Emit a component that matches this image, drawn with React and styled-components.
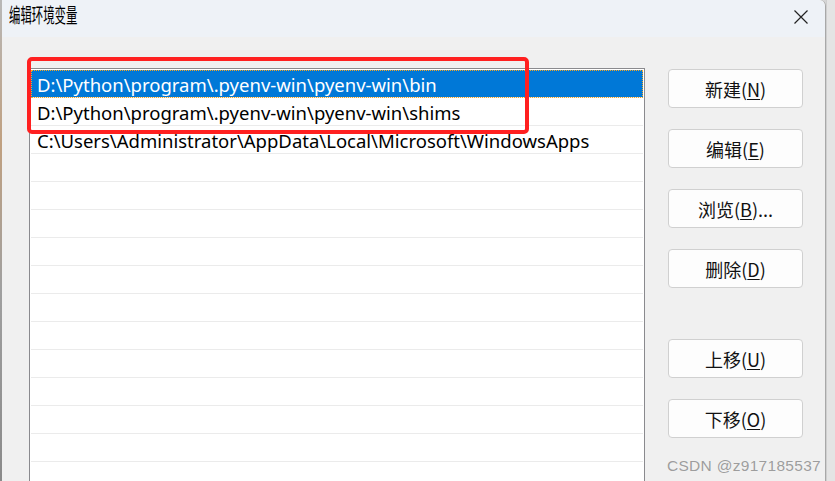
import React from "react";
import styled, { createGlobalStyle } from "styled-components";

const Global = createGlobalStyle`
  html, body { margin: 0; padding: 0; background: #dcdcdc; overflow: hidden; }
  body { width: 835px; height: 481px; font-family: "Noto Sans", "Noto Sans CJK SC", sans-serif; }
`;

const Screen = styled.div`
  width: 835px;
  height: 481px;
  display: flex;
  background: #d6d6d6;
  overflow: hidden;
`;

const LeftStrip = styled.div`
  width: 2px;
  background: linear-gradient(#b8b8b8, #c0a080 30%, #a0a0a0 60%, #8a8a8a);
`;

const Dialog = styled.div`
  width: 823px;
  height: 100%;
  background: #f0f0f0;
  border-right: 1px solid #a8a8a8;
  border-top-right-radius: 6px;
  display: flex;
  flex-direction: column;
  overflow: hidden;
`;

const RightStrip = styled.div`
  flex: 1;
  background: #e4e4e4;
  border-left: 1px solid #cfcfcf;
`;

const TitleBar = styled.div`
  height: 37px;
  flex: none;
  background: #eef2f7;
  display: flex;
  align-items: center;
  justify-content: space-between;
  padding: 0 16px 0 7px;
  border-top-right-radius: 6px;
`;

const Title = styled.span`
  font-family: "Noto Sans CJK SC", sans-serif;
  font-size: 20px;
  font-weight: 400;
  line-height: 20px;
  color: #000;
  display: inline-block;
  transform: scaleX(0.57);
  transform-origin: left center;
  margin-top: -8px;
  white-space: nowrap;
`;

const Close = styled.svg`
  width: 16px;
  height: 16px;
  margin-top: -4px;
`;

const Body = styled.div`
  flex: 1;
  min-height: 0;
  display: flex;
  padding: 31px 0 0 27px;
  gap: 23px;
  position: relative;
  overflow: hidden;
`;

const ListBox = styled.div`
  width: 612px;
  flex: none;
  border: 1px solid #8a8a8e;
  border-bottom: none;
  background: #fff;
  padding: 1px;
  align-self: stretch;
  overflow: hidden;
`;

const Row = styled.div`
  height: 26px;
  padding-top: 1px;
  border-bottom: 1px solid #ebebeb;
  display: flex;
  align-items: center;
  padding-left: 6px;
  font-family: "Noto Sans", sans-serif;
  font-size: 18.5px;
  color: ${(p) => (p.$sel ? "#fff" : "#000")};
  background: ${(p) => (p.$sel ? "#0078d7" : "transparent")};
  outline: ${(p) => (p.$sel ? "1px dotted #f5a623" : "none")};
  outline-offset: -1px;
  white-space: nowrap;
`;

const Highlight = styled.div`
  position: absolute;
  left: 25px;
  top: 20px;
  width: 494px;
  height: 69px;
  border: 4px solid #ff2020;
  border-radius: 5px;
  pointer-events: none;
`;

const Buttons = styled.div`
  display: flex;
  flex-direction: column;
  gap: 21px;
  padding-top: 1px;
`;

const Button = styled.div`
  width: 133px;
  height: 37px;
  background: #fdfdfd;
  border: 1px solid #d0d0d0;
  border-radius: 4px;
  display: flex;
  align-items: center;
  justify-content: center;
  font-family: "Noto Sans CJK SC", sans-serif;
  font-size: 18px;
  color: #111;
  margin-top: ${(p) => (p.$extra ? "30px" : "0")};
`;

const U = styled.span`
  text-decoration: underline;
  text-underline-offset: 2px;
  text-decoration-thickness: 1px;
`;

const Watermark = styled.div`
  position: absolute;
  right: 4px;
  bottom: 6px;
  font-family: "Liberation Sans", Arial, sans-serif;
  font-size: 15.5px;
  line-height: 18px;
  color: rgba(120, 120, 120, 0.7);
  letter-spacing: 0.3px;
`;

const rows = [
  "D:\\Python\\program\\.pyenv-win\\pyenv-win\\bin",
  "D:\\Python\\program\\.pyenv-win\\pyenv-win\\shims",
  "C:\\Users\\Administrator\\AppData\\Local\\Microsoft\\WindowsApps",
];

const buttons = [
  ["新建(", "N", ")"],
  ["编辑(", "E", ")"],
  ["浏览(", "B", ")..."],
  ["删除(", "D", ")"],
  ["上移(", "U", ")", true],
  ["下移(", "O", ")"],
];

export default function App() {
  const all = [...rows, ...Array(12).fill("")];
  return (
    <Screen>
      <Global />
      <LeftStrip />
      <Dialog>
        <TitleBar>
          <Title>编辑环境变量</Title>
          <Close viewBox="0 0 16 16">
            <path d="M1.5 1.5 L14.5 14.5 M14.5 1.5 L1.5 14.5" stroke="#222" strokeWidth="1.2" fill="none" />
          </Close>
        </TitleBar>
        <Body>
          <ListBox>
            {all.map((t, i) => (
              <Row key={i} $sel={i === 0}>{t}</Row>
            ))}
          </ListBox>
          <Buttons>
            {buttons.map(([a, u, b, extra]) => (
              <Button key={a} $extra={extra}>
                {a}<U>{u}</U>{b}
              </Button>
            ))}
          </Buttons>
          <Highlight />
          <Watermark>CSDN @z917185537</Watermark>
        </Body>
      </Dialog>
      <RightStrip />
    </Screen>
  );
}
